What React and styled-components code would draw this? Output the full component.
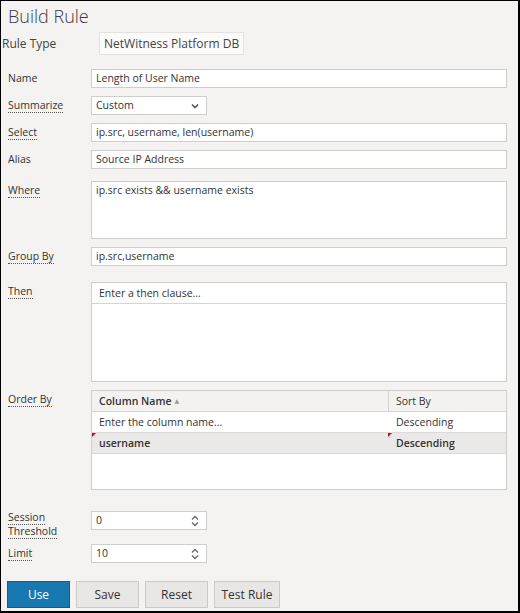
import React from 'react';
import styled, { createGlobalStyle } from 'styled-components';

const GlobalStyle = createGlobalStyle`
	html, body {
		margin: 0;
		padding: 0;
		background: #fff;
	}
	* {
		box-sizing: border-box;
	}
`;

const Frame = styled.div`
	width: 520px;
	height: 613px;
	background-color: #f4f3f1;
	border: 1px solid #000;
	border-right-width: 2px;
	border-bottom-width: 2px;
	font-family: "Open Sans", "DejaVu Sans", sans-serif;
	font-size: 10.5px;
	color: #333;
	overflow: hidden;
`;

const Title = styled.h1`
	margin: 0;
	padding: 2px 0 0 7px;
	height: 31px;
	font-size: 18px;
	line-height: 26px;
	font-weight: 300;
	color: #3b3848;
`;

const RuleTypeRow = styled.div`
	display: flex;
	align-items: center;
	padding-left: 1px;
	height: 23px;
`;

const RuleTypeLabel = styled.span`
	width: 97px;
	font-size: 12px;
	color: #444;
`;

const RuleTypeBox = styled.div`
	height: 23px;
	padding: 0 4px;
	line-height: 21px;
	font-size: 12px;
	background-color: #fbfbfa;
	border: 1px solid #e3e2e0;
	color: #444;
`;

const Form = styled.div`
	display: grid;
	grid-template-columns: 83px 416px;
	padding-left: 7px;
	margin-top: 14px;
`;

const Row = styled.div`
	display: contents;
`;

const Label = styled.div`
	margin-top: ${p => p.$mt || 0}px;
	margin-bottom: ${p => p.$mb || 0}px;
	line-height: ${p => p.$lh || 19}px;
	align-self: start;
`;

const Hint = styled.span`
	border-bottom: ${p => (p.$plain ? 'none' : '1px dotted #555')};
`;

const Cell = styled.div`
	margin-top: ${p => p.$mt || 0}px;
	width: ${p => p.$w || 416}px;
`;

const Input = styled.div`
	position: relative;
	height: ${p => p.$h || 19}px;
	padding: 0 4px;
	line-height: 17px;
	background-color: #fff;
	border: 1px solid #cfcecc;
	color: #333;
`;

const Chevron = styled.svg`
	position: absolute;
	right: 7px;
	top: 50%;
	transform: translateY(-50%);
`;

const Panel = styled.div`
	display: flex;
	flex-direction: column;
	height: 100px;
	background-color: #fff;
	border: 1px solid #cfcecc;
`;

const PanelHead = styled.div`
	height: 21px;
	padding-left: 7px;
	line-height: 20px;
	border-bottom: 1px solid #d6d5d3;
	color: #333;
`;

const Table = styled.div`
	display: grid;
	grid-template-columns: 296px 1fr;
	grid-auto-rows: 21px;
	height: 100px;
	align-content: start;
	background-color: #fff;
	border: 1px solid #cfcecc;
`;

const Th = styled.div`
	padding-left: 7px;
	line-height: 20px;
	background-color: #f3f2f0;
	border-bottom: 1px solid #d6d5d3;
	border-left: ${p => (p.$divider ? '1px solid #d6d5d3' : 'none')};
	font-weight: ${p => (p.$bold ? 600 : 400)};
	color: #333;
`;

const SortArrow = styled.span`
	margin-left: 3px;
	font-size: 6px;
	color: #999;
	vertical-align: 2px;
`;

const Td = styled.div`
	position: relative;
	padding-left: ${p => (p.$divider ? 8 : 7)}px;
	line-height: 20px;
	border-bottom: 1px solid #dcdbd9;
	background-color: ${p => (p.$selected ? '#eae9e7' : '#fff')};
	font-weight: ${p => (p.$selected ? 600 : 400)};
	color: #333;
`;

const Dirty = styled.span`
	position: absolute;
	left: 0;
	top: 0;
	width: 0;
	height: 0;
	border-top: 4px solid #d0021b;
	border-right: 4px solid transparent;
`;

const Buttons = styled.div`
	display: flex;
	gap: 6px;
	padding-left: 6px;
	margin-top: 18px;
`;

const Button = styled.button`
	height: 27px;
	width: ${p => p.$w || 63}px;
	padding: 0;
	font-family: inherit;
	font-size: 12px;
	color: ${p => (p.$primary ? '#fff' : '#333')};
	background-color: ${p => (p.$primary ? '#1878b0' : '#e8e7e5')};
	border: 1px solid ${p => (p.$primary ? '#105f8d' : '#cbcac8')};
	cursor: pointer;
`;

const SelectChevron = () => (
	<Chevron width="8" height="5" viewBox="0 0 8 5">
		<path d="M1 1 L4 4 L7 1" fill="none" stroke="#555" strokeWidth="1.6" />
	</Chevron>
);

const SpinChevrons = () => (
	<Chevron width="8" height="12" viewBox="0 0 8 12">
		<path d="M1 4.5 L4 1.5 L7 4.5 M1 7.5 L4 10.5 L7 7.5" fill="none" stroke="#666" strokeWidth="1.3" />
	</Chevron>
);

export default function App() {
	return (
		<>
			<GlobalStyle />
			<Frame>
				<Title>Build Rule</Title>
				<RuleTypeRow>
					<RuleTypeLabel>Rule Type</RuleTypeLabel>
					<RuleTypeBox>NetWitness Platform DB</RuleTypeBox>
				</RuleTypeRow>
				<Form>
					<Row>
						<Label><Hint $plain>Name</Hint></Label>
						<Cell><Input>Length of User Name</Input></Cell>
					</Row>
					<Row>
						<Label $mt={8}><Hint>Summarize</Hint></Label>
						<Cell $mt={8} $w={116}>
							<Input>Custom<SelectChevron /></Input>
						</Cell>
					</Row>
					<Row>
						<Label $mt={8}><Hint>Select</Hint></Label>
						<Cell $mt={8}><Input>ip.src, username, len(username)</Input></Cell>
					</Row>
					<Row>
						<Label $mt={8}><Hint $plain>Alias</Hint></Label>
						<Cell $mt={8}><Input>Source IP Address</Input></Cell>
					</Row>
					<Row>
						<Label $mt={12}><Hint>Where</Hint></Label>
						<Cell $mt={12}><Input $h={58}>ip.src exists &amp;&amp; username exists</Input></Cell>
					</Row>
					<Row>
						<Label $mt={8}><Hint>Group By</Hint></Label>
						<Cell $mt={8}><Input>ip.src,username</Input></Cell>
					</Row>
					<Row>
						<Label $mt={16}><Hint>Then</Hint></Label>
						<Cell $mt={16}>
							<Panel>
								<PanelHead>Enter a then clause...</PanelHead>
							</Panel>
						</Cell>
					</Row>
					<Row>
						<Label $mt={8}><Hint>Order By</Hint></Label>
						<Cell $mt={8}>
							<Table>
								<Th $bold>Column Name<SortArrow>▲</SortArrow></Th>
								<Th $divider>Sort By</Th>
								<Td>Enter the column name...</Td>
								<Td $divider>Descending</Td>
								<Td $selected><Dirty />username</Td>
								<Td $selected $divider><Dirty />Descending</Td>
							</Table>
						</Cell>
					</Row>
					<Row>
						<Label $mt={20} $mb={-10} $lh={14}><Hint>Session</Hint><br /><Hint>Threshold</Hint></Label>
						<Cell $mt={21} $w={116}>
							<Input>0<SpinChevrons /></Input>
						</Cell>
					</Row>
					<Row>
						<Label $mt={14}><Hint>Limit</Hint></Label>
						<Cell $mt={14} $w={116}>
							<Input>10<SpinChevrons /></Input>
						</Cell>
					</Row>
				</Form>
				<Buttons>
					<Button $primary>Use</Button>
					<Button>Save</Button>
					<Button>Reset</Button>
					<Button $w={66}>Test Rule</Button>
				</Buttons>
			</Frame>
		</>
	);
}
